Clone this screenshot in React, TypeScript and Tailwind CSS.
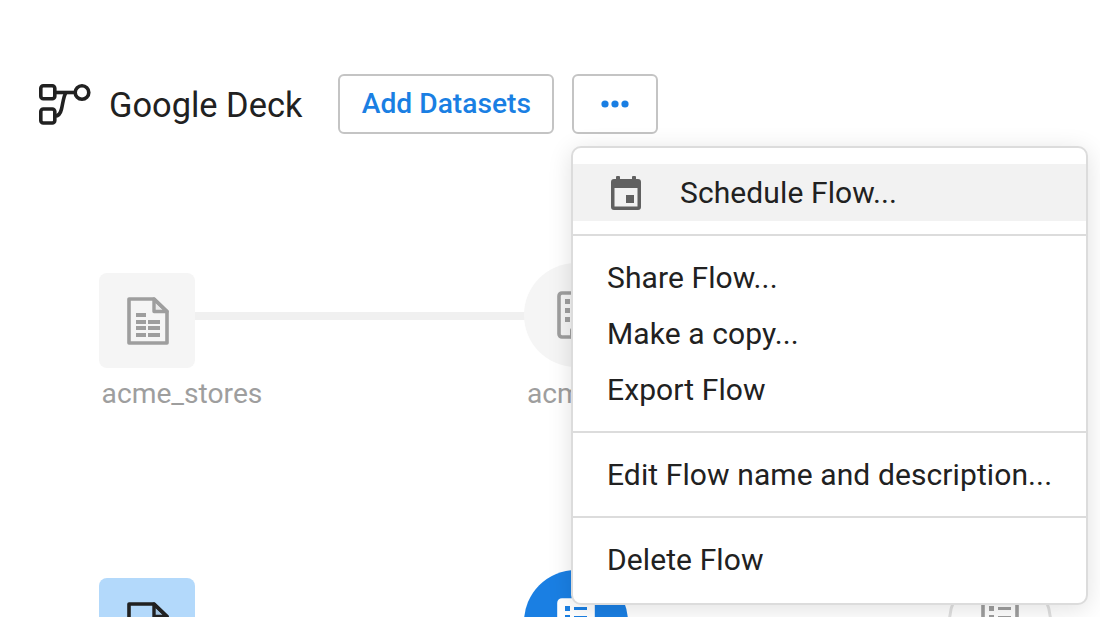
import type { ReactNode } from 'react';

// flow glyph next to the title
function FlowIcon() {
  return (
    <svg width="54" height="42" viewBox="0 0 54 42" fill="none" stroke="#212121" strokeWidth="3.6">
      <rect x="2.8" y="2.8" width="14" height="13" rx="2.5" />
      <rect x="2.8" y="26" width="14" height="14" rx="2.5" />
      <circle cx="44" cy="9.5" r="6.8" />
      <path d="M17 9.5H37" />
      <path d="M28 9.5C25.5 13 25 20 23.5 26C22.5 30.5 20.5 33 17 33" />
    </svg>
  );
}

// sheet with a folded corner, used by the square source nodes
function SheetIcon({ color }: { color: string }) {
  return (
    <svg className="ml-[2px]" width="42" height="48" viewBox="0 0 42 48">
      <path
        d="M2 2H27L40 14.500V46H2Z"
        fill="none"
        stroke={color}
        strokeWidth="3.6"
        strokeLinejoin="round"
      />
      <path d="M27 2V14.500H40Z" fill={color} fillOpacity="0.12" stroke={color} strokeWidth="3.4" strokeLinejoin="round" />
      <g fill={color}>
        <rect x="9" y="16" width="10" height="4" />
        <rect x="9" y="23" width="10" height="4" />
        <rect x="21" y="23" width="12" height="4" />
        <rect x="9" y="29" width="10" height="4" />
        <rect x="21" y="29" width="12" height="4" />
        <rect x="9" y="36" width="10" height="4" />
        <rect x="21" y="36" width="12" height="4" />
      </g>
    </svg>
  );
}

// table glyph used by the round nodes
function TableIcon({ color, fill, cell }: { color: string; fill: string; cell: string }) {
  return (
    <svg width="38" height="48" viewBox="0 0 38 48">
      <rect x="2" y="2" width="34" height="44" rx="3" fill={fill} stroke={color} strokeWidth="3.6" />
      <rect x="13" y="37" width="25" height="11" rx="2" fill={color} />
      <g fill={cell}>
        <rect x="8" y="8" width="5" height="5" />
        <rect x="17" y="9" width="13" height="3" />
        <rect x="8" y="17" width="5" height="5" />
        <rect x="17" y="18" width="13" height="3" />
        <rect x="8" y="26" width="5" height="5" />
        <rect x="17" y="27" width="13" height="3" />
      </g>
    </svg>
  );
}

function CalendarIcon() {
  return (
    <svg width="30" height="34" viewBox="0 0 30 34" fill="#616161">
      <rect x="5" y="0" width="4" height="6" rx="1" />
      <rect x="21" y="0" width="4" height="6" rx="1" />
      <path d="M3 3H27a3 3 0 0 1 3 3V31a3 3 0 0 1-3 3H3a3 3 0 0 1-3-3V6a3 3 0 0 1 3-3ZM3.500 12V30.500H26.500V12Z" fillRule="evenodd" />
      <rect x="15" y="19" width="8" height="8" />
    </svg>
  );
}

function MenuItem({ children }: { children: ReactNode }) {
  return (
    <div className="h-[56px] flex items-center pl-[34px] text-[30px] tracking-[0.1px] text-[#212121] whitespace-nowrap">
      {children}
    </div>
  );
}

export default function App() {
  return (
    <div className="relative w-[1100px] h-[617px] overflow-hidden bg-white font-['Roboto',sans-serif]">
      {/* header */}
      <div className="flex items-center pt-[74px] pl-[38px]">
        <FlowIcon />
        <div className="ml-[17px] h-[60px] text-[34.400px] leading-[62px] text-[#212121]">Google Deck</div>
        <button className="ml-[36px] w-[216px] h-[60px] rounded-[6px] border-2 border-[#c4c4c4] text-[28.200px] font-medium text-[#1a7fe3]">
          Add Datasets
        </button>
        <button className="ml-[18px] w-[86px] h-[60px] rounded-[6px] border-2 border-[#c4c4c4] flex items-center justify-center">
          <svg width="28" height="8" viewBox="0 0 28 8" fill="#1a7fe3">
            <circle cx="4" cy="4" r="3.600" />
            <circle cx="14" cy="4" r="3.600" />
            <circle cx="24" cy="4" r="3.600" />
          </svg>
        </button>
      </div>

      {/* flow canvas */}
      <div className="absolute left-[195px] top-[312px] w-[330px] h-[8px] bg-[#f0f0f0]" />

      <div className="absolute left-[99px] top-[273px] w-[96px] h-[95px] rounded-[8px] bg-[#f5f5f5] flex items-center justify-center">
        <SheetIcon color="#9e9e9e" />
      </div>
      <div className="absolute left-[82px] top-[376px] w-[200px] text-center text-[28.200px] leading-[36px] text-[#9e9e9e]">acme_stores</div>

      <div className="absolute left-[524px] top-[263px] w-[104px] h-[104px] rounded-full bg-[#f5f5f5] flex items-center justify-center">
        <TableIcon color="#9e9e9e" fill="#f5f5f5" cell="#9e9e9e" />
      </div>
      <div className="absolute left-[527px] top-[376px] w-[44px] overflow-hidden text-[28.200px] leading-[36px] text-[#9e9e9e] whitespace-nowrap">acme_stores</div>

      <div className="absolute left-[99px] top-[578px] w-[96px] h-[95px] rounded-[8px] bg-[#b3d9fb] flex items-center justify-center">
        <SheetIcon color="#212121" />
      </div>

      <div className="absolute left-[524px] top-[570px] w-[104px] h-[104px] rounded-full bg-[#1a7fe3] flex items-center justify-center">
        <TableIcon color="#ffffff" fill="#ffffff" cell="#1a7fe3" />
      </div>

      <div className="absolute left-[948px] top-[570px] w-[104px] h-[104px] rounded-full border-[3px] border-[#e0e0e0] bg-white flex items-center justify-center">
        <TableIcon color="#9e9e9e" fill="#ffffff" cell="#9e9e9e" />
      </div>

      {/* dropdown menu */}
      <div className="absolute left-[571px] top-[146px] w-[517px] h-[459px] rounded-[10px] border-2 border-[#dcdcdc] bg-white pt-[16px] shadow-[0_4px_24px_rgba(0,0,0,0.12)]">
        <div className="h-[57px] flex items-center bg-[#f2f2f2] pl-[38px] text-[30px] tracking-[0.1px] text-[#212121] whitespace-nowrap">
          <CalendarIcon />
          <span className="ml-[39px]">Schedule Flow...</span>
        </div>
        <div className="mt-[13px] h-[2px] bg-[#dcdcdc]" />
        <div className="pt-[13px] pb-[14px]">
          <MenuItem>Share Flow...</MenuItem>
          <MenuItem>Make a copy...</MenuItem>
          <MenuItem>Export Flow</MenuItem>
        </div>
        <div className="h-[2px] bg-[#dcdcdc]" />
        <div className="pt-[13px] pb-[14px]">
          <MenuItem>Edit Flow name and description...</MenuItem>
        </div>
        <div className="h-[2px] bg-[#dcdcdc]" />
        <div className="pt-[13px]">
          <MenuItem>Delete Flow</MenuItem>
        </div>
      </div>
    </div>
  );
}
